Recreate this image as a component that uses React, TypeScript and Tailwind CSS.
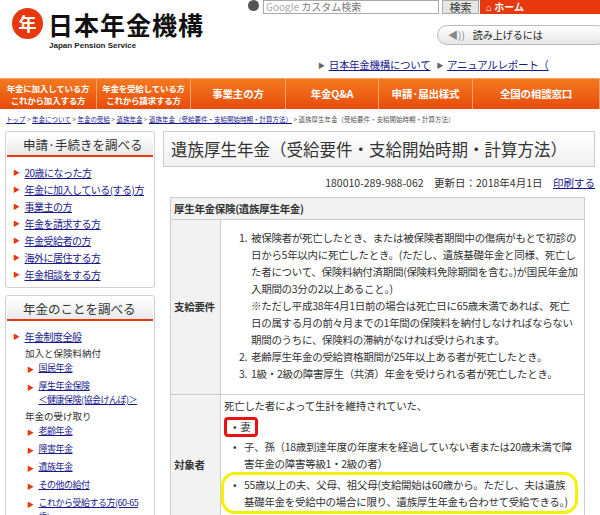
import React from "react";

const F = { fontFamily: '"Noto Sans CJK JP", "Noto Sans", sans-serif' };

const Tri = () => <span className="text-[#e8380d] text-[7px] mr-[5px] leading-[17px]">▶</span>;

function SideBox({ title, children }: { title: string; children: React.ReactNode }) {
  return (
    <div className="border border-[#d0d0d0] rounded-[3px] bg-white">
      <div className="h-[24px] mx-[1px] mt-[1px] bg-gradient-to-b from-white to-[#e9e9e9] border-b-2 border-[#e8380d] text-[12.5px] text-[#333] pl-[16px] leading-[24px]">
        {title}
      </div>
      <div className="px-[7px] pt-[7px] pb-[4px]">{children}</div>
    </div>
  );
}

const SLink = ({ t, sub }: { t: React.ReactNode; sub?: boolean }) => (
  <div className={`flex items-start tracking-[-0.5px] ${sub ? "pl-[14px] text-[9px] leading-[14px] mb-[1px]" : "text-[10px] leading-[17px]"}`}>
    <Tri />
    <span className="text-[#1a1a8c] underline">{t}</span>
  </div>
);

export default function App() {
  return (
    <div className="w-[600px] h-[515px] overflow-hidden bg-white text-[#333]" style={F}>
      {/* header */}
      <div className="relative h-[78px]">
        <div className="absolute left-[12px] top-[8px] w-[31px] h-[31px] rounded-full bg-[#e8380d] flex items-center justify-center text-white text-[18px] font-bold">年</div>
        <div className="absolute left-[48px] top-[6px] text-[25px] font-bold text-[#111] tracking-[1px]">日本年金機構</div>
        <div className="absolute left-[49px] top-[40px] text-[8px] font-bold text-[#222]" style={{ fontFamily: '"Liberation Sans", sans-serif' }}>Japan Pension Service</div>
        <div className="absolute left-[248px] top-0 w-[11px] h-[11px] rounded-full bg-[#555]" />
        <div className="absolute left-[263px] top-0 w-[176px] h-[14px] border border-[#aaa] text-[10px] leading-[12px] pl-[2px] text-[#777]">
          <span className="text-[#aaa]">Google</span> カスタム検索
        </div>
        <div className="absolute left-[442px] top-0 w-[37px] h-[14px] bg-[#e6e6e6] border border-[#aaa] text-[11px] leading-[12px] text-center">検索</div>
        <div className="absolute left-[480px] top-0 w-[120px] h-[14px] bg-[#e8380d] text-white text-[10px] leading-[14px] pl-[6px] font-bold">⌂ ホーム</div>
        <div className="absolute left-[437px] top-[25px] w-[170px] h-[20px] rounded-[10px] border border-[#bbb] bg-gradient-to-b from-white to-[#e6e6e6] text-[10px] leading-[18px] pl-[10px] text-[#222]">
          <span className="text-[#888] mr-[8px]">◀))</span>読み上げるには
        </div>
        <div className="absolute left-[318px] top-[57px] text-[10.5px] whitespace-nowrap flex gap-[4px] tracking-[-0.3px]">
          <span className="text-[#666] text-[7px] leading-[16px]">▶</span>
          <span className="text-[#1a1a8c] underline">日本年金機構について</span>
          <span className="text-[#666] text-[7px] leading-[16px] ml-[2px]">▶</span>
          <span className="text-[#1a1a8c] underline">アニュアルレポート（</span>
        </div>
      </div>
      {/* nav */}
      <div className="h-[31px] flex bg-gradient-to-b from-[#f4781e] to-[#e84a0c] border-t border-[#f8a060] text-white font-bold">
        {[
          ["年金に加入している方", "これから加入する方", 97],
          ["年金を受給している方", "これから請求する方", 94],
          ["事業主の方", "", 95],
          ["年金Q&A", "", 93],
          ["申請·届出様式", "", 94],
          ["全国の相談窓口", "", 127],
        ].map(([a, b, w], i) => (
          <div key={i} style={{ width: w as number }} className="border-r border-[#f7a36a] flex flex-col items-center justify-center leading-[12px] text-[8.5px] tracking-[-0.2px] whitespace-nowrap overflow-hidden">
            <span className={b ? "" : "text-[10.5px]"}>{a}</span>
            {b && <span>{b}</span>}
          </div>
        ))}
      </div>
      {/* breadcrumb */}
      <div className="h-[22px] text-[6.5px] text-[#555] pl-[6px] pt-[6px] whitespace-nowrap">
        <span className="underline text-[#1a1a8c]">トップ</span> &gt; <span className="underline text-[#1a1a8c]">年金について</span> &gt; <span className="underline text-[#1a1a8c]">年金の受給</span> &gt; <span className="underline text-[#1a1a8c]">遺族年金</span> &gt; <span className="underline text-[#1a1a8c]">遺族年金（受給要件・支給開始時期・計算方法）</span> &gt; 遺族厚生年金（受給要件・支給開始時期・計算方法）
      </div>
      <div className="flex gap-[8px] pl-[5px]">
        {/* sidebar */}
        <div className="w-[150px] shrink-0 flex flex-col gap-[7px]">
          <SideBox title="申請·手続きを調べる">
            {["20歳になった方", "年金に加入している(する)方", "事業主の方", "年金を請求する方", "年金受給者の方", "海外に居住する方", "年金相談をする方"].map((t) => (
              <SLink key={t} t={t} />
            ))}
          </SideBox>
          <SideBox title="年金のことを調べる">
            <SLink t="年金制度全般" />
            <div className="text-[9.5px] leading-[16px] pl-[12px]">加入と保険料納付</div>
            <SLink sub t="国民年金" />
            <SLink sub t={<>厚生年金保険<br />＜健康保険(協会けんぽ)＞</>} />
            <div className="text-[9.5px] leading-[16px] pl-[12px]">年金の受け取り</div>
            {["老齢年金", "障害年金", "遺族年金", "その他の給付", "これから受給する方(60-65歳)"].map((t) => (
              <SLink key={t} sub t={t} />
            ))}
            <SLink t="社会保障協定" />
            <SLink t="マクロ経済スライドとは" />
            <SLink t="各種統計" />
          </SideBox>
        </div>
        {/* main */}
        <div className="w-[432px]">
          <div className="h-[36px] border border-[#ccc] bg-gradient-to-b from-white to-[#f0f0f0] text-[16.5px] text-[#333] pl-[7px] leading-[34px] whitespace-nowrap">
            遺族厚生年金（受給要件・支給開始時期・計算方法）
          </div>
          <div className="text-right text-[10.5px] mt-[8px] whitespace-nowrap">
            180010-289-988-062　更新日：2018年4月1日　<span className="text-[#1a1a8c] underline">印刷する</span>
          </div>
          <div className="ml-[7px] mr-[10px] mt-[6px] border border-[#ccc] text-[10.5px] leading-[17px] tracking-[-0.3px]">
            <div className="h-[22px] bg-[#f2f2f2] border-b border-[#ccc] font-bold pl-[3px] leading-[22px]">厚生年金保険(遺族厚生年金)</div>
            <div className="flex border-b border-[#ccc]">
              <div className="w-[50px] shrink-0 bg-[#f2f2f2] border-r border-[#ccc] font-bold flex items-center pl-[3px]">支給要件</div>
              <div className="pl-[18px] pr-[6px] pt-[9px] pb-[12px]">
                <div className="flex"><span className="w-[12px] shrink-0">1.</span><div>被保険者が死亡したとき、または被保険者期間中の傷病がもとで初診の日から5年以内に死亡したとき。(ただし、遺族基礎年金と同様、死亡した者について、保険料納付済期間(保険料免除期間を含む。)が国民年金加入期間の3分の2以上あること。)<br />※ただし平成38年4月1日前の場合は死亡日に65歳未満であれば、死亡日の属する月の前々月までの1年間の保険料を納付しなければならない期間のうちに、保険料の滞納がなければ受けられます。</div></div>
                <div className="flex"><span className="w-[12px] shrink-0">2.</span><div>老齢厚生年金の受給資格期間が25年以上ある者が死亡したとき。</div></div>
                <div className="flex"><span className="w-[12px] shrink-0">3.</span><div>1級・2級の障害厚生（共済）年金を受けられる者が死亡したとき。</div></div>
              </div>
            </div>
            <div className="flex">
              <div className="w-[50px] shrink-0 bg-[#f2f2f2] border-r border-[#ccc] font-bold flex items-center pl-[3px]">対象者</div>
              <div className="pl-[3px] pr-[6px] pt-[2px] pb-[20px]">
                <div>死亡した者によって生計を維持されていた、</div>
                <div className="inline-block mt-[3px] mb-[1px] border-[3px] border-[#e81010] rounded-[4px] pl-[6px] pr-[4px] leading-[14px]">•&nbsp;&nbsp;妻</div>
                <div className="flex pl-[9px]"><span className="w-[11px] shrink-0">•</span><div>子、孫（18歳到達年度の年度末を経過していない者または20歳未満で障害年金の障害等級1・2級の者）</div></div>
                <div className="flex pl-[9px] border-[3px] border-[#f5f000] rounded-[14px] -ml-[3px] pt-[1px] pb-[1px]"><span className="w-[11px] shrink-0">•</span><div>55歳以上の夫、父母、祖父母(支給開始は60歳から。ただし、夫は遺族基礎年金を受給中の場合に限り、遺族厚生年金も合わせて受給できる。)</div></div>
              </div>
            </div>
          </div>
        </div>
      </div>
    </div>
  );
}
